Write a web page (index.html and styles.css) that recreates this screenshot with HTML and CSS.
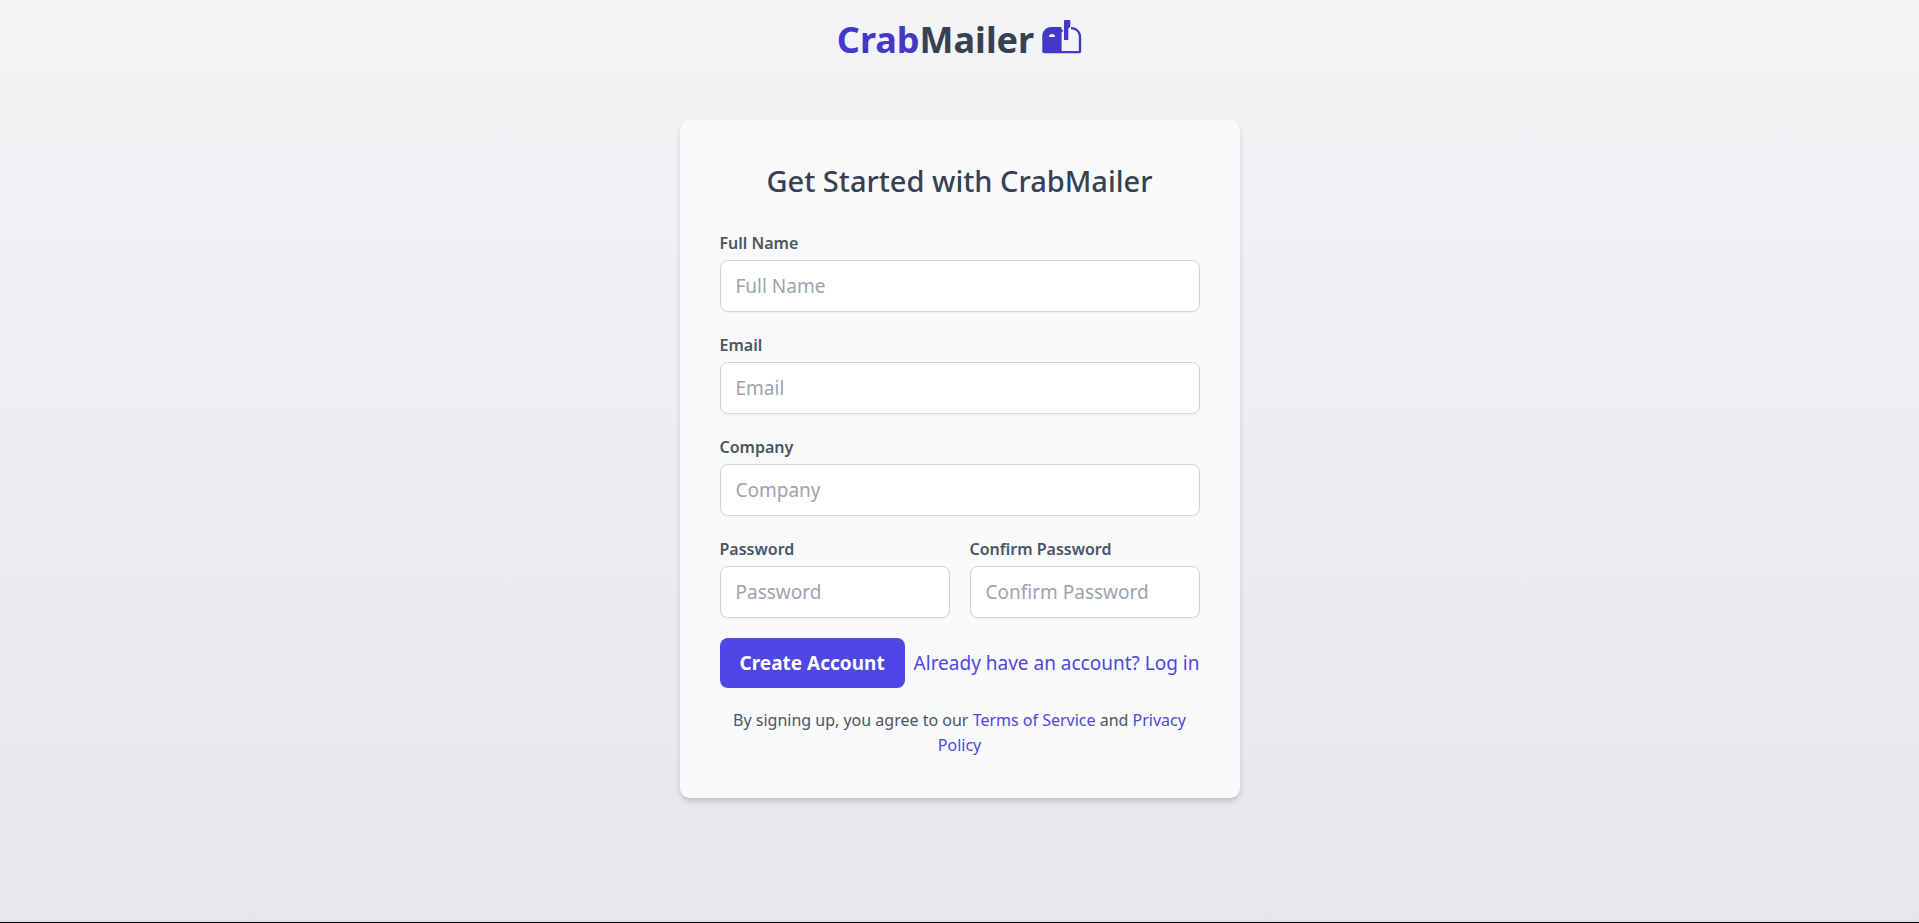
FILE: index.html
```html
<!DOCTYPE html>
<html lang="en">
<head>
  <meta charset="utf-8">
  <meta name="viewport" content="width=device-width, initial-scale=1">
  <title>CrabMailer</title>
  <link rel="stylesheet" href="styles.css">
</head>
<body class="page">
  <header class="brand">
    <span class="brand-name"><span class="brand-accent">Crab</span>Mailer</span>
    <svg class="brand-icon" viewBox="0 0 40 34" aria-hidden="true">
      <path fill="currentColor" fill-rule="evenodd" d="M9 7H19.500V9L21.500 11L19.600 12V31H36.800V17C36.800 12.500 34 9.500 29 9.300V7C35 7 39.200 11.500 39.200 17V31.500Q39.200 33.200 37.500 33.200H2Q.3 33.200 .3 31.500V16C.3 11 4 7 9 7ZM7 17H13C13 15 12 14 10 14S7 15 7 17Z"/>
      <path fill="currentColor" d="M23 0H27.500Q28.300 0 28.300 .8V6.500Q28.300 7.500 26.300 8.500V20H22V1Q22 0 23 0Z"/>
    </svg>
  </header>
  <main class="card">
    <h1 class="card-title">Get Started with CrabMailer</h1>
    <form class="form">
      <div class="field">
        <label for="name">Full Name</label>
        <input id="name" type="text" placeholder="Full Name">
      </div>
      <div class="field">
        <label for="email">Email</label>
        <input id="email" type="email" placeholder="Email">
      </div>
      <div class="field">
        <label for="company">Company</label>
        <input id="company" type="text" placeholder="Company">
      </div>
      <div class="field-row">
        <div class="field">
          <label for="password">Password</label>
          <input id="password" type="password" placeholder="Password">
        </div>
        <div class="field">
          <label for="confirm">Confirm Password</label>
          <input id="confirm" type="password" placeholder="Confirm Password">
        </div>
      </div>
      <div class="actions">
        <button class="submit" type="submit">Create Account</button>
        <a class="link" href="#login">Already have an account? Log in</a>
      </div>
    </form>
    <p class="terms">By signing up, you agree to our <a class="link" href="#terms">Terms of Service</a> and <a class="link" href="#privacy">Privacy Policy</a></p>
  </main>
</body>
</html>
```

FILE: styles.css
```css
* {
  box-sizing: border-box;
}

.page {
  margin: 0;
  min-height: 100vh;
  display: flex;
  flex-direction: column;
  align-items: center;
  gap: 40px;
  border-bottom: 1px solid #000;
  background: linear-gradient(#f3f4f6, #e5e7eb);
  color: #374151;
  font-family: "Segoe UI", "Noto Sans", sans-serif;
  font-size: 19px;
  line-height: 30px;
}

.brand {
  display: flex;
  align-items: center;
  gap: 8px;
  height: 80px;
}

.brand-name {
  font-size: 36px;
  font-weight: 700;
}

.brand-accent,
.brand-icon {
  color: #4338ca;
}

.brand-icon {
  width: 40px;
  height: 34px;
  margin-bottom: 6px;
}

.card {
  width: 100%;
  max-width: 560px;
  padding: 40px;
  border-radius: 10px;
  background: #f9fafb;
  box-shadow: 0 4px 6px -1px rgb(0 0 0 / 10%), 0 2px 4px -1px rgb(0 0 0 / 6%), 0 5px 8px rgb(0 0 0 / 4%);
}

.card-title {
  margin: 0 0 28px;
  font-size: 29px;
  font-weight: 500;
  line-height: 42px;
  text-align: center;
}

.form {
  display: grid;
  gap: 20px;
}

.field {
  display: grid;
  gap: 4px;
  min-width: 0;
}

.field label {
  color: #4b5563;
  font-size: 16px;
  font-weight: 600;
  line-height: 26px;
}

.field input {
  width: 100%;
  height: 52px;
  padding: 0 15px;
  border: 1px solid #d1d5db;
  border-radius: 8px;
  background: #fff;
  box-shadow: 0 1px 2px rgb(0 0 0 / 5%);
  color: #374151;
  font: inherit;
}

.field input::placeholder {
  color: #9ca3af;
}

.field-row {
  display: grid;
  grid-template-columns: 1fr 1fr;
  gap: 20px;
}

.actions {
  display: flex;
  align-items: center;
  justify-content: space-between;
}

.submit {
  padding: 10px 20px;
  border: 0;
  border-radius: 8px;
  background: #4f46e5;
  color: #fff;
  font: inherit;
  font-weight: 700;
  cursor: pointer;
}

.link {
  color: #4f46e5;
  text-decoration: none;
}

.terms {
  margin: 20px 0 0;
  color: #4b5563;
  font-size: 16px;
  line-height: 25px;
  text-align: center;
}
```
